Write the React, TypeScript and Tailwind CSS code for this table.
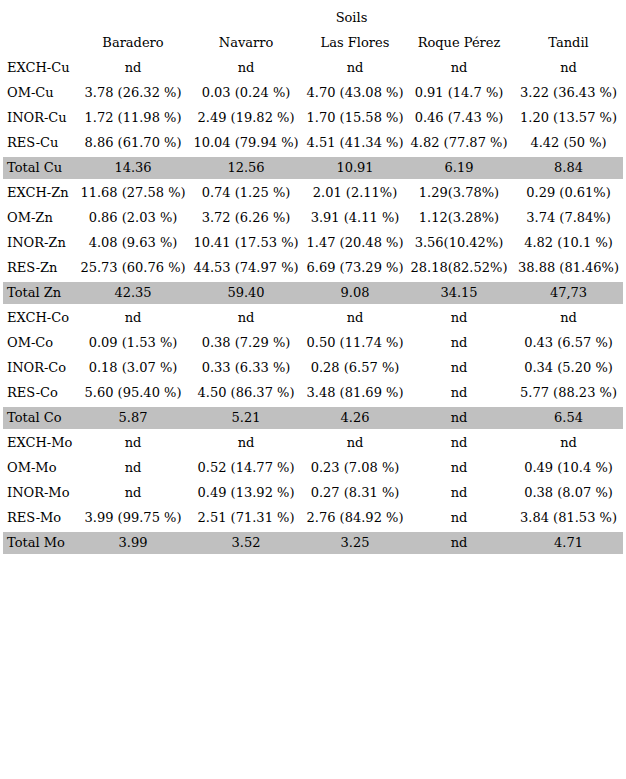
const cols = ["Baradero", "Navarro", "Las Flores", "Roque Pérez", "Tandil"];

type Row = { label: string; vals: string[]; total?: boolean };

const rows: Row[] = [
  { label: "EXCH-Cu", vals: ["nd", "nd", "nd", "nd", "nd"] },
  { label: "OM-Cu", vals: ["3.78 (26.32 %)", "0.03 (0.24 %)", "4.70 (43.08 %)", "0.91 (14.7 %)", "3.22 (36.43 %)"] },
  { label: "INOR-Cu", vals: ["1.72 (11.98 %)", "2.49 (19.82 %)", "1.70 (15.58 %)", "0.46 (7.43 %)", "1.20 (13.57 %)"] },
  { label: "RES-Cu", vals: ["8.86 (61.70 %)", "10.04 (79.94 %)", "4.51 (41.34 %)", "4.82 (77.87 %)", "4.42 (50 %)"] },
  { label: "Total Cu", vals: ["14.36", "12.56", "10.91", "6.19", "8.84"], total: true },
  { label: "EXCH-Zn", vals: ["11.68 (27.58 %)", "0.74 (1.25 %)", "2.01 (2.11%)", "1.29(3.78%)", "0.29 (0.61%)"] },
  { label: "OM-Zn", vals: ["0.86 (2.03 %)", "3.72 (6.26 %)", "3.91 (4.11 %)", "1.12(3.28%)", "3.74 (7.84%)"] },
  { label: "INOR-Zn", vals: ["4.08 (9.63 %)", "10.41 (17.53 %)", "1.47 (20.48 %)", "3.56(10.42%)", "4.82 (10.1 %)"] },
  { label: "RES-Zn", vals: ["25.73 (60.76 %)", "44.53 (74.97 %)", "6.69 (73.29 %)", "28.18(82.52%)", "38.88 (81.46%)"] },
  { label: "Total Zn", vals: ["42.35", "59.40", "9.08", "34.15", "47,73"], total: true },
  { label: "EXCH-Co", vals: ["nd", "nd", "nd", "nd", "nd"] },
  { label: "OM-Co", vals: ["0.09 (1.53 %)", "0.38 (7.29 %)", "0.50 (11.74 %)", "nd", "0.43 (6.57 %)"] },
  { label: "INOR-Co", vals: ["0.18 (3.07 %)", "0.33 (6.33 %)", "0.28 (6.57 %)", "nd", "0.34 (5.20 %)"] },
  { label: "RES-Co", vals: ["5.60 (95.40 %)", "4.50 (86.37 %)", "3.48 (81.69 %)", "nd", "5.77 (88.23 %)"] },
  { label: "Total Co", vals: ["5.87", "5.21", "4.26", "nd", "6.54"], total: true },
  { label: "EXCH-Mo", vals: ["nd", "nd", "nd", "nd", "nd"] },
  { label: "OM-Mo", vals: ["nd", "0.52 (14.77 %)", "0.23 (7.08 %)", "nd", "0.49 (10.4 %)"] },
  { label: "INOR-Mo", vals: ["nd", "0.49 (13.92 %)", "0.27 (8.31 %)", "nd", "0.38 (8.07 %)"] },
  { label: "RES-Mo", vals: ["3.99 (99.75 %)", "2.51 (71.31 %)", "2.76 (84.92 %)", "nd", "3.84 (81.53 %)"] },
  { label: "Total Mo", vals: ["3.99", "3.52", "3.25", "nd", "4.71"], total: true },
];

const grid = "grid grid-cols-[77px_106px_120px_98px_110px_109px] items-center";

export default function App() {
  return (
    <div className="w-[626px] h-[779px] bg-white text-black text-[13px] leading-none pt-[5px] pl-[3px]" style={{ fontFamily: '"DejaVu Serif", serif' }}>
      <div className="w-[620px]">
        <div className={`${grid} h-[25px]`}>
          <div></div>
          <div className="col-span-5 text-center">Soils</div>
        </div>
        <div className={`${grid} h-[25px]`}>
          <div></div>
          {cols.map((c) => (
            <div key={c} className="text-center">{c}</div>
          ))}
        </div>
        {rows.map((r) => (
          <div key={r.label} className="h-[25px] py-[1.5px]">
            <div className={`${grid} h-[22px] ${r.total ? "bg-[#c0c0c0]" : ""}`}>
              <div className="pl-[4px] whitespace-nowrap">{r.label}</div>
              {r.vals.map((v, i) => (
                <div key={i} className="text-center whitespace-nowrap">{v}</div>
              ))}
            </div>
          </div>
        ))}
      </div>
    </div>
  );
}
